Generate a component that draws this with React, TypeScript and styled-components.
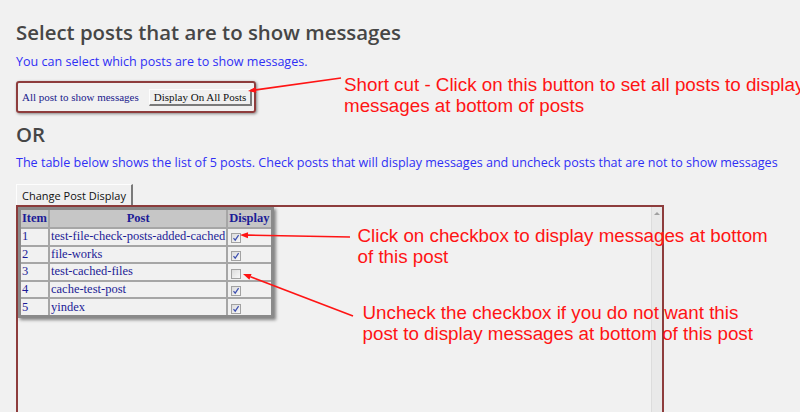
import React from "react";
import styled, { createGlobalStyle } from "styled-components";

const GlobalStyle = createGlobalStyle`
  html, body {
    margin: 0;
    padding: 0;
    background: #f1f1f1;
    overflow: hidden;
  }
`;

const sans = `"Open Sans", "Noto Sans", sans-serif`;
const serif = `"Liberation Serif", "DejaVu Serif", serif`;
const arial = `"Liberation Sans", Arial, sans-serif`;

const Page = styled.div`
  position: relative;
  width: 800px;
  height: 412px;
  padding: 0 16px;
  box-sizing: border-box;
  overflow: hidden;
`;

const Heading = styled.h2<{ $top: number }>`
  margin: ${(p) => p.$top}px 0 0 0;
  font-family: ${sans};
  font-size: 20.4px;
  font-weight: 600;
  line-height: 26px;
  color: #464646;
`;

const Intro = styled.p<{ $top: number }>`
  margin: ${(p) => p.$top}px 0 0 0;
  font-family: ${sans};
  font-size: 12.55px;
  line-height: 18px;
  color: #2f2ff5;
  white-space: nowrap;
`;

const ShortcutRow = styled.div`
  display: flex;
  align-items: flex-start;
  height: 32px;
  margin-top: 10px;
`;

const ShortcutBox = styled.div`
  display: flex;
  align-items: center;
  gap: 10px;
  width: 240px;
  height: 32px;
  flex-shrink: 0;
  box-sizing: border-box;
  padding: 0 4px;
  border: 2px solid #8e3d3d;
  border-radius: 3px;
  box-shadow: 1px 1px 3px rgba(0, 0, 0, 0.45);
`;

const BoxLabel = styled.span`
  font-family: ${serif};
  font-size: 11px;
  color: #1a1a8c;
  white-space: nowrap;
`;

const OldButton = styled.button<{ $font: string }>`
  font-family: ${(p) => p.$font};
  font-size: 11px;
  color: #111;
  background: #f0f0f0;
  padding: 1px 4px;
  border-style: solid;
  border-width: 1px 2px 2px 1px;
  border-color: #fdfdfd #7a7a7a #7a7a7a #fdfdfd;
  white-space: nowrap;
  cursor: pointer;
`;

const Note = styled.div<{ $indent: number; $top: number }>`
  margin: ${(p) => p.$top}px 0 0 ${(p) => p.$indent}px;
  font-family: ${arial};
  font-size: 18.8px;
  line-height: 21px;
  color: #ff1414;
  white-space: nowrap;
`;

const TabButton = styled(OldButton)`
  display: block;
  margin-top: 12px;
  height: 21px;
  padding: 0 5px;
  border-width: 1px 2px 0 1px;
  border-color: #fdfdfd #7a7a7a transparent #fdfdfd;
`;

const Panel = styled.div`
  display: flex;
  width: 648px;
  height: 230px;
  box-sizing: border-box;
  border: 2px solid #8e3d3d;
  border-bottom: none;
`;

const PanelBody = styled.div`
  flex: 1;
  min-width: 0;
  display: flex;
  align-items: flex-start;
`;

/* annotations spill over the panel edge, so keep them above the scrollbar */
const NoteColumn = styled.div`
  flex-shrink: 0;
  position: relative;
  z-index: 1;
`;

const ScrollTrack = styled.div`
  flex-shrink: 0;
  width: 11px;
  background: #e9e9e9;
  border-left: 1px solid #dcdcdc;
  display: flex;
  justify-content: center;
  padding-top: 5px;
  box-sizing: border-box;
`;

const ScrollArrow = styled.div`
  width: 0;
  height: 0;
  border-left: 3px solid transparent;
  border-right: 3px solid transparent;
  border-bottom: 3px solid #a0a0a0;
`;

const PostTable = styled.table`
  flex-shrink: 0;
  border-collapse: collapse;
  border: 3px solid #8a8a8a;
  box-shadow: 2px 2px 3px rgba(0, 0, 0, 0.45);
  font-family: ${serif};
  font-size: 12.5px;
  color: #1c1c96;
`;

const HeadCell = styled.th<{ $w: number }>`
  width: ${(p) => p.$w}px;
  height: 17px;
  padding: 0 1px;
  background: #c6c6c6;
  border: 2px solid #a6a6a6;
  font-weight: bold;
  text-align: center;
  line-height: 15px;
`;

const Cell = styled.td`
  height: 15.6px;
  padding: 0 1px;
  border: 2px solid #a6a6a6;
  line-height: 15px;
  white-space: nowrap;
`;

const Box = styled.span<{ $on: boolean }>`
  display: inline-flex;
  align-items: center;
  justify-content: center;
  width: 10px;
  height: 10px;
  margin: 2px 0 0 2px;
  box-sizing: border-box;
  border: 1px solid #a2a2a2;
  background: linear-gradient(135deg, #dcdcdc, #f8f8f8);
  vertical-align: middle;
`;

const Overlay = styled.svg`
  position: absolute;
  left: 0;
  top: 0;
  pointer-events: none;
`;

function Check({ on }: { on: boolean }) {
  return (
    <Box $on={on}>
      {on && (
        <svg width="8" height="8" viewBox="0 0 8 8">
          <path d="M1.5 4.2 L3.2 6.2 L6.6 1.2" fill="none" stroke="#3d4fb0" strokeWidth="1.2" />
        </svg>
      )}
    </Box>
  );
}

const posts = [
  { id: 1, name: "test-file-check-posts-added-cached", on: true },
  { id: 2, name: "file-works", on: true },
  { id: 3, name: "test-cached-files", on: false },
  { id: 4, name: "cache-test-post", on: true },
  { id: 5, name: "yindex", on: true },
];

function Arrow({ x1, y1, x2, y2 }: { x1: number; y1: number; x2: number; y2: number }) {
  const a = Math.atan2(y2 - y1, x2 - x1);
  const len = 8;
  const w = 3;
  const bx = x2 - len * Math.cos(a);
  const by = y2 - len * Math.sin(a);
  const px = -Math.sin(a) * w;
  const py = Math.cos(a) * w;
  return (
    <g>
      <line x1={x1} y1={y1} x2={bx} y2={by} stroke="#ff1414" strokeWidth="1.6" />
      <polygon points={`${x2},${y2} ${bx + px},${by + py} ${bx - px},${by - py}`} fill="#ff1414" />
    </g>
  );
}

export default function App() {
  return (
    <>
      <GlobalStyle />
      <Page>
        <Heading $top={19}>Select posts that are to show messages</Heading>
        <Intro $top={8}>You can select which posts are to show messages.</Intro>
        <ShortcutRow>
          <ShortcutBox>
            <BoxLabel>All post to show messages</BoxLabel>
            <OldButton $font={serif}>Display On All Posts</OldButton>
          </ShortcutBox>
          <div>
            <Note $indent={88} $top={-7}>
              Short cut - Click on this button to set all posts to display
              <br />
              messages at bottom of posts
            </Note>
          </div>
        </ShortcutRow>
        <Heading $top={8}>OR</Heading>
        <Intro $top={7}>
          The table below shows the list of 5 posts. Check posts that will display messages and uncheck posts that are not to show messages
        </Intro>
        <TabButton $font={sans}>Change Post Display</TabButton>
        <Panel>
          <PanelBody>
            <PostTable>
              <thead>
                <tr>
                  <HeadCell $w={24}>Item</HeadCell>
                  <HeadCell $w={174}>Post</HeadCell>
                  <HeadCell $w={40}>Display</HeadCell>
                </tr>
              </thead>
              <tbody>
                {posts.map((p) => (
                  <tr key={p.id}>
                    <Cell>{p.id}</Cell>
                    <Cell>{p.name}</Cell>
                    <Cell>
                      <Check on={p.on} />
                    </Cell>
                  </tr>
                ))}
              </tbody>
            </PostTable>
            <NoteColumn>
              <Note $indent={84} $top={18}>
                Click on checkbox to display messages at bottom
                <br />
                of this post
              </Note>
              <Note $indent={89} $top={35}>
                Uncheck the checkbox if you do not want this
                <br />
                post to display messages at bottom of this post
              </Note>
            </NoteColumn>
          </PanelBody>
          <ScrollTrack>
            <ScrollArrow />
          </ScrollTrack>
        </Panel>
        <Overlay width="800" height="412">
          <Arrow x1={341} y1={78} x2={248} y2={91} />
          <Arrow x1={350} y1={237} x2={240} y2={235} />
          <Arrow x1={353} y1={316} x2={243} y2={274} />
        </Overlay>
      </Page>
    </>
  );
}
